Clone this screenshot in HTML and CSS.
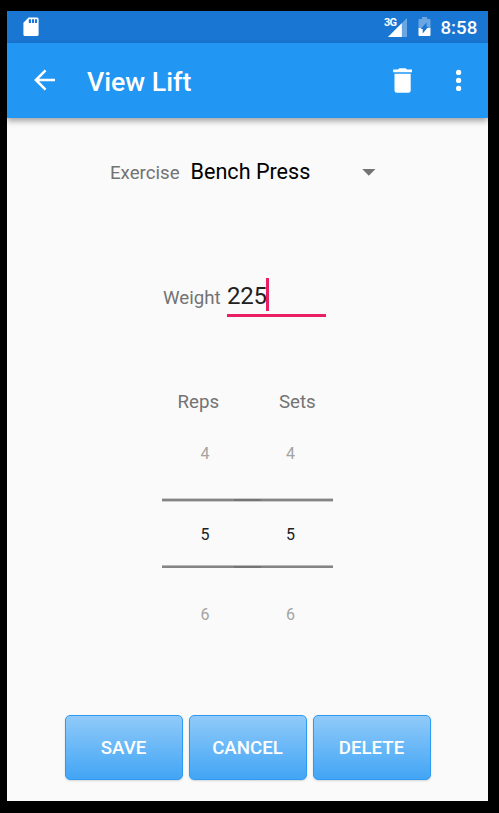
FILE: index.html
```html
<!DOCTYPE html>
<html lang="en">
<head>
<meta charset="utf-8">
<title>View Lift</title>
<link rel="stylesheet" href="styles.css">
</head>
<body>
<div class="screen">
  <div class="status">
    <svg class="sd" width="16" height="20" viewBox="0 0 16 20"><path fill="#fff" fill-rule="evenodd" d="M5.6.5H14Q15.6.5 15.6 2V17.500Q15.600 19 14 19H2Q.4 19 .4 17.500V5.700ZM5.800 2.200V6H8V2.200ZM8.900 2.200V6H11V2.200ZM11.900 2.200V6H14V2.200Z"/></svg>
    <span class="network">3G</span>
    <svg class="signal" width="19" height="19" viewBox="0 0 19 19"><path fill="#6ba6e2" d="M19 0V19H0Z"/><path fill="#fff" d="M13.800 5.200V19H0Z"/></svg>
    <svg class="battery" width="13" height="20" viewBox="0 0 13 20"><path fill="#6ba6e2" d="M4 0H9V2H11.500Q12.500 2 12.500 3V11H.5V3Q.5 2 1.500 2H4Z"/><path fill="#fff" d="M.5 11H12.500V18Q12.500 19 11.500 19H1.500Q.5 19 .5 18Z"/><path fill="#1976d2" d="M8.500 5.500V9.700H10.300L4.700 16.500V12H2.700Z"/></svg>
    <span class="clock">8:58</span>
  </div>
  <header class="toolbar">
    <svg class="back" width="22" height="22" viewBox="0 0 22 22"><path fill="none" stroke="#fff" stroke-width="2.600" d="M21 11H2M11.500 1.300L1.900 11L11.500 20.700"/></svg>
    <h1>View Lift</h1>
    <svg class="trash" width="20" height="26" viewBox="0 0 20 26"><path fill="#fff" d="M6.300.3H12.700L14 1.600H19V4.300H.2V1.600H5ZM1.500 5.800H17.700V22.300Q17.700 24.800 15.200 24.800H4Q1.500 24.800 1.500 22.300Z"/></svg>
    <svg class="more" width="6" height="22" viewBox="0 0 6 22"><g fill="#fff"><circle cx="2.600" cy="3.400" r="2.600"/><circle cx="2.600" cy="11.400" r="2.600"/><circle cx="2.600" cy="19.400" r="2.600"/></g></svg>
  </header>
  <main>
    <div class="exercise">
      <span class="label">Exercise</span>
      <span class="choice">Bench Press</span>
      <svg width="14" height="7" viewBox="0 0 14 7"><path fill="#737373" d="M.2 0H13.500L6.850 6.700Z"/></svg>
    </div>
    <div class="weight">
      <span class="label">Weight</span>
      <div class="field"><span>225</span><i class="caret"></i></div>
    </div>
    <div class="heads"><span class="label">Reps</span><span class="label">Sets</span></div>
    <div class="pickers">
      <div class="row faded"><span>4</span><span>4</span></div>
      <div class="row current"><span>5</span><span>5</span></div>
      <div class="row faded"><span>6</span><span>6</span></div>
    </div>
    <div class="actions"><button>SAVE</button><button>CANCEL</button><button>DELETE</button></div>
  </main>
</div>
</body>
</html>
```

FILE: styles.css
```css
* { box-sizing: border-box; }
body { margin: 0; height: 813px; background: #000; font-family: Roboto, sans-serif; overflow: hidden; padding: 11px 11px 12px 7px; }
.screen { width: 481px; height: 790px; background: #fafafa; overflow: hidden; display: flex; flex-direction: column; }
svg { display: block; flex: none; }
.status { height: 32px; background: #1976d2; color: #fff; display: flex; align-items: flex-start; padding-left: 16px; flex: none; }
.sd { margin-top: 6px; }
.network { width: 12px; margin: 5px 0 0 345px; font-size: 11px; line-height: 13px; font-weight: 700; letter-spacing: -.9px; white-space: nowrap; }
.signal { margin: 7px 0 0 -8px; }
.battery { margin: 6px 0 0 11px; }
.clock { margin: 6px 0 0 9.500px; font-size: 18.700px; line-height: 22px; font-weight: 500; white-space: nowrap; }
.toolbar { height: 75px; flex: none; background: #2196f3; color: #fff; display: flex; align-items: flex-start; padding-left: 27px; box-shadow: 0 3px 6px rgba(0,0,0,.36); position: relative; }
.back { margin-top: 26px; }
h1 { margin: 23px 0 0 31px; width: 306px; font-size: 26.700px; line-height: 32px; font-weight: 500; }
.trash { margin-top: 25px; }
.more { margin: 26px 0 0 43px; }
main { flex: 1; }
.label { color: #737373; font-size: 18.700px; line-height: 22px; }
.exercise { display: flex; align-items: center; height: 26px; margin: 41px 0 0 103px; }
.exercise .label { width: 80.500px; padding-top: 1px; }
.choice { width: 171px; font-size: 21.600px; line-height: 26px; color: #000; }
.weight { display: flex; margin: 93px 0 0 156px; height: 40px; }
.weight .label { width: 64px; padding-top: 9px; }
.field { width: 99px; height: 39px; border-bottom: 3px solid #e91e63; display: flex; font-size: 24px; line-height: 28px; color: #212121; }
.field span { width: 40px; padding-top: 4px; letter-spacing: -.2px; }
.caret { width: 3px; height: 33px; background: #e91e63; margin-left: -1px; }
.heads { display: grid; grid-template-columns: 101.500px 80px; margin: 73px 0 0 170.500px; }
.pickers { width: 171px; margin: 31px 0 0 155px; font-size: 16px; color: #212121; }
.row { display: grid; grid-template-columns: 86px 85px; text-align: center; line-height: 20px; }
.faded { color: #a3a3a3; height: 54px; }
.current { height: 71px; padding-top: 27px; background: linear-gradient(90deg, #848484 72px, #747474 72px 99px, #848484 99px) 0 1px / 100% 2px no-repeat, linear-gradient(#cbcbcb, #cbcbcb) 0 0 / 100% 4px no-repeat, linear-gradient(90deg, #848484 72px, #747474 72px 99px, #848484 99px) 0 68px / 100% 2px no-repeat, linear-gradient(#b8b8b8, #b8b8b8) 0 67px / 100% 1px no-repeat; }
.current + .faded { padding-top: 36px; height: 56px; }
.actions { display: flex; gap: 6px; margin: 90px 0 0 57.500px; }
button { width: 118px; height: 64.500px; padding: 2px 0 0; border: 1.500px solid #2f9af2; border-radius: 5px; background: linear-gradient(#90caf9, #42a5f5); color: #fff; font: 500 18.700px/22px Roboto, sans-serif; box-shadow: 0 1px 2px rgba(0,0,0,.15); }
```
